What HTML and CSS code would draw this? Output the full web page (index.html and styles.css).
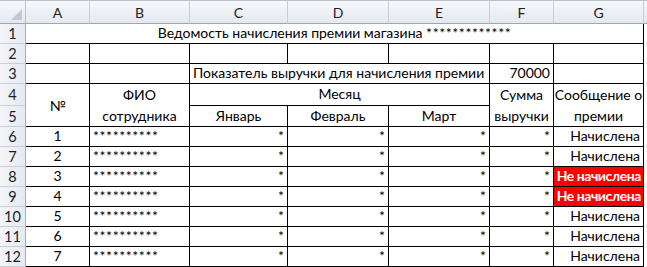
FILE: index.html
```html
<!DOCTYPE html>
<html lang="ru">
<head>
<meta charset="utf-8">
<title>Ведомость</title>
<link rel="stylesheet" href="styles.css">
</head>
<body>
<div class="sheet">
  <div class="ch corner"><span class="tri"></span></div>
  <div class="ch">A</div><div class="ch">B</div><div class="ch">C</div><div class="ch">D</div><div class="ch">E</div><div class="ch">F</div><div class="ch">G</div><div class="ch fill"></div>

  <div class="rh">1</div>
  <div class="c ctr title"><span>Ведомость начисления премии магазина <span class="ast">*************</span></span></div>
  <div class="f"></div>

  <div class="rh">2</div>
  <div class="c"></div><div class="c"></div><div class="c"></div><div class="c"></div><div class="c"></div><div class="c"></div><div class="c"></div>
  <div class="f"></div>

  <div class="rh">3</div>
  <div class="c"></div><div class="c"></div>
  <div class="c l span3">Показатель выручки для начисления премии</div>
  <div class="c r">70000</div><div class="c"></div>
  <div class="f"></div>

  <div class="rh">4</div>
  <div class="c mid rs2">№</div>
  <div class="c mid rs2">ФИО<br>сотрудника</div>
  <div class="c mid span3 month">Месяц</div>
  <div class="c mid rs2">Сумма<br>выручки</div>
  <div class="c mid rs2">Сообщение о<br>премии</div>
  <div class="f"></div>

  <div class="rh">5</div>
  <div class="c ctr">Январь</div><div class="c ctr">Февраль</div><div class="c ctr">Март</div>
  <div class="f"></div>

  <div class="rh">6</div>
  <div class="c ctr">1</div><div class="c l ast">**********</div><div class="c r">*</div><div class="c r">*</div><div class="c r">*</div><div class="c r">*</div><div class="c r">Начислена</div>
  <div class="f"></div>

  <div class="rh">7</div>
  <div class="c ctr">2</div><div class="c l ast">**********</div><div class="c r">*</div><div class="c r">*</div><div class="c r">*</div><div class="c r">*</div><div class="c r">Начислена</div>
  <div class="f"></div>

  <div class="rh">8</div>
  <div class="c ctr">3</div><div class="c l ast">**********</div><div class="c r">*</div><div class="c r">*</div><div class="c r">*</div><div class="c r">*</div><div class="c r red">Не начислена</div>
  <div class="f"></div>

  <div class="rh">9</div>
  <div class="c ctr">4</div><div class="c l ast">**********</div><div class="c r">*</div><div class="c r">*</div><div class="c r">*</div><div class="c r">*</div><div class="c r red">Не начислена</div>
  <div class="f"></div>

  <div class="rh">10</div>
  <div class="c ctr">5</div><div class="c l ast">**********</div><div class="c r">*</div><div class="c r">*</div><div class="c r">*</div><div class="c r">*</div><div class="c r">Начислена</div>
  <div class="f"></div>

  <div class="rh">11</div>
  <div class="c ctr">6</div><div class="c l ast">**********</div><div class="c r">*</div><div class="c r">*</div><div class="c r">*</div><div class="c r">*</div><div class="c r">Начислена</div>
  <div class="f"></div>

  <div class="rh">12</div>
  <div class="c ctr">7</div><div class="c l ast">**********</div><div class="c r">*</div><div class="c r">*</div><div class="c r">*</div><div class="c r">*</div><div class="c r">Начислена</div>
  <div class="f"></div>
</div>
</body>
</html>
```

FILE: styles.css
```css
html, body {
  margin: 0;
  padding: 0;
  background: #fff;
}

.sheet {
  display: grid;
  grid-template-columns: 26px 64px 100px 98px 101px 101px 64px 90px 1fr;
  grid-template-rows: 24px 20px 20px 20px 22px 21px repeat(7, 20px);
  width: 647px;
  font-family: Lato, Carlito, "Open Sans", sans-serif;
  font-size: 14px;
  color: #000;
}

.sheet > div {
  box-sizing: border-box;
  min-width: 0;
}

.ch {
  background: linear-gradient(#f6f8fb, #e4e9f0);
  border-top: 1px solid #b9c1cc;
  border-right: 1px solid #c9ced6;
  border-bottom: 1px solid #9ba6b5;
  display: flex;
  align-items: center;
  justify-content: center;
  color: #1e1e1e;
}

.ch.fill {
  border-right: none;
}

.corner {
  position: relative;
  border-right: 1px solid #b9c1cc;
}

.tri {
  position: absolute;
  right: 3px;
  bottom: 3px;
  width: 0;
  height: 0;
  border-left: 11px solid transparent;
  border-bottom: 11px solid #c3c8cf;
}

.rh {
  background: linear-gradient(90deg, #f3f5f9, #e6eaf1);
  border-right: 1px solid #a7b1be;
  border-bottom: 1px solid #c9ced6;
  display: flex;
  align-items: center;
  justify-content: center;
  color: #1e1e1e;
  font-size: 14.5px;
}

.c {
  border-right: 1px solid #000;
  border-bottom: 1px solid #000;
  display: flex;
  align-items: flex-end;
  padding: 0 3px 1px 3px;
  line-height: 18px;
  white-space: nowrap;
}

.ast {
  letter-spacing: 0.6px;
}

.l { justify-content: flex-start; }
.r { justify-content: flex-end; }
.ctr { justify-content: center; }

.mid {
  align-items: center;
  justify-content: center;
  text-align: center;
  line-height: 21px;
  padding: 0;
}

.title { grid-column: span 7; }
.span3 { grid-column: span 3; }
.rs2 { grid-row: span 2; }

.month {
  align-items: flex-end;
  padding-bottom: 1px;
}

.red {
  background: #ff0000;
  color: #fff;
  font-weight: bold;
  letter-spacing: -0.45px;
  padding-right: 2px;
}

.f {
  background: #fff;
}
```
